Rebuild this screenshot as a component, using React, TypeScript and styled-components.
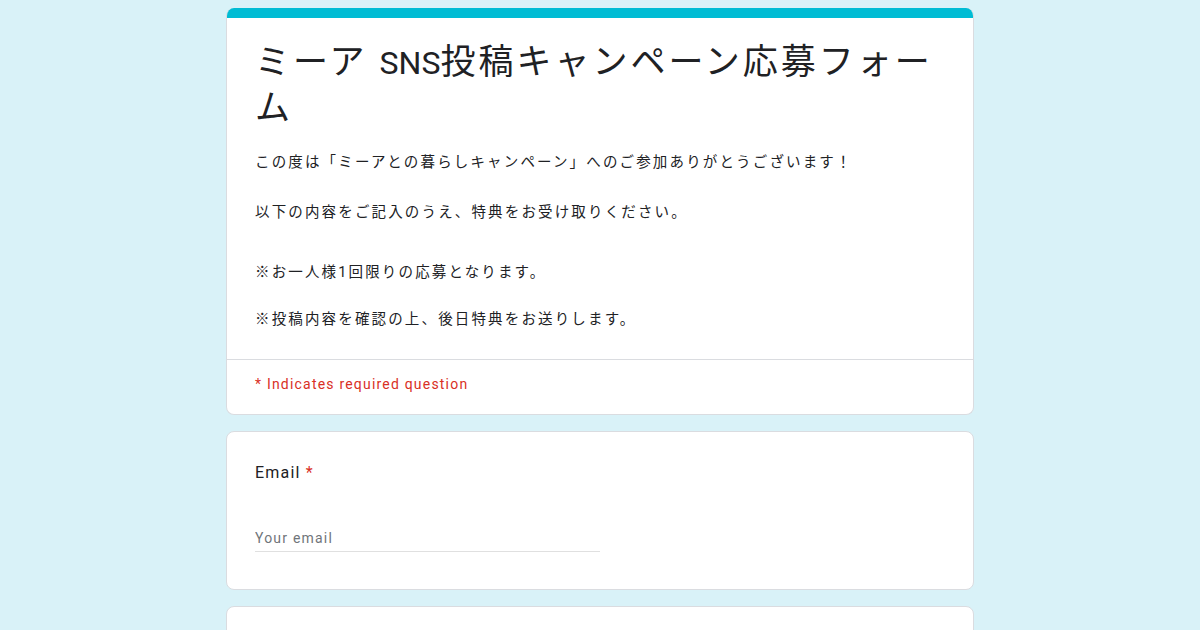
import styled, { createGlobalStyle } from 'styled-components';

const GlobalStyle = createGlobalStyle`
  html, body {
    margin: 0;
    padding: 0;
    background: #d9f2f8;
  }
  body {
    font-family: Roboto, "Noto Sans CJK JP", sans-serif;
    color: #202124;
  }
`;

const description: { text: string; space: number }[] = [
  { text: 'この度は「ミーアとの暮らしキャンペーン」へのご参加ありがとうございます！', space: 0 },
  { text: '以下の内容をご記入のうえ、特典をお受け取りください。', space: 26 },
  { text: '※お一人様1回限りの応募となります。', space: 36 },
  { text: '※投稿内容を確認の上、後日特典をお送りします。', space: 23 },
];

function App() {
  return (
    <>
      <GlobalStyle />
      <Page>
        <HeaderCard>
          <TopBar />
          <HeaderBody>
            <Title>
              ミーア<Latin>SNS</Latin>投稿キャンペーン応募フォーム
            </Title>
            <Description>
              {description.map((line) => (
                <Paragraph key={line.text} $space={line.space}>
                  {line.text}
                </Paragraph>
              ))}
            </Description>
          </HeaderBody>
          <RequiredNote>* Indicates required question</RequiredNote>
        </HeaderCard>

        <QuestionCard>
          <Label>
            Email <Star>*</Star>
          </Label>
          <EmailInput placeholder="Your email" />
        </QuestionCard>

        <QuestionCard />
      </Page>
    </>
  );
}

export default App;

const Page = styled.div`
  width: 748px;
  margin: 0 auto;
  padding-top: 8px;
  display: flex;
  flex-direction: column;
  gap: 16px;
`;

const Card = styled.div`
  background: #fff;
  border: 1px solid #dadce0;
  border-radius: 8px;
  box-sizing: border-box;
`;

const HeaderCard = styled(Card)`
  overflow: hidden;
  border-top: none;
`;

const TopBar = styled.div`
  height: 10px;
  background: #00bcd4;
`;

const HeaderBody = styled.div`
  padding: 22px 28px 27px 28px;
  border-bottom: 1px solid #dadce0;
`;

const Title = styled.h1`
  margin: 0;
  font-size: 35px;
  font-weight: 400;
  line-height: 45px;
  letter-spacing: 3px;
  color: #202124;
`;

const Latin = styled.span`
  margin-left: 12px;
  font-size: 32px;
  letter-spacing: 0;
`;

const Description = styled.div`
  margin-top: 20px;
`;

const Paragraph = styled.p<{ $space: number }>`
  margin: ${({ $space }) => $space}px 0 0 0;
  font-size: 14.5px;
  line-height: 24px;
  letter-spacing: 2.15px;
  color: #202124;
`;

const RequiredNote = styled.div`
  padding: 13px 28px 19px 28px;
  font-size: 14px;
  line-height: 22px;
  letter-spacing: 1.2px;
  color: #d93025;
`;

const QuestionCard = styled(Card)`
  min-height: 159px;
  padding: 29px 28px 37px 28px;
`;

const Label = styled.div`
  font-size: 16px;
  line-height: 24px;
  letter-spacing: 1.2px;
  color: #202124;
`;

const Star = styled.span`
  color: #d93025;
`;

const EmailInput = styled.input`
  display: block;
  margin-top: 39px;
  width: 345px;
  height: 27px;
  padding: 0;
  border: none;
  border-bottom: 1px solid #e0e0e0;
  font-family: Roboto, sans-serif;
  font-size: 14px;
  letter-spacing: 1.2px;
  color: #202124;
  outline: none;
  &::placeholder {
    color: #70757a;
  }
`;
